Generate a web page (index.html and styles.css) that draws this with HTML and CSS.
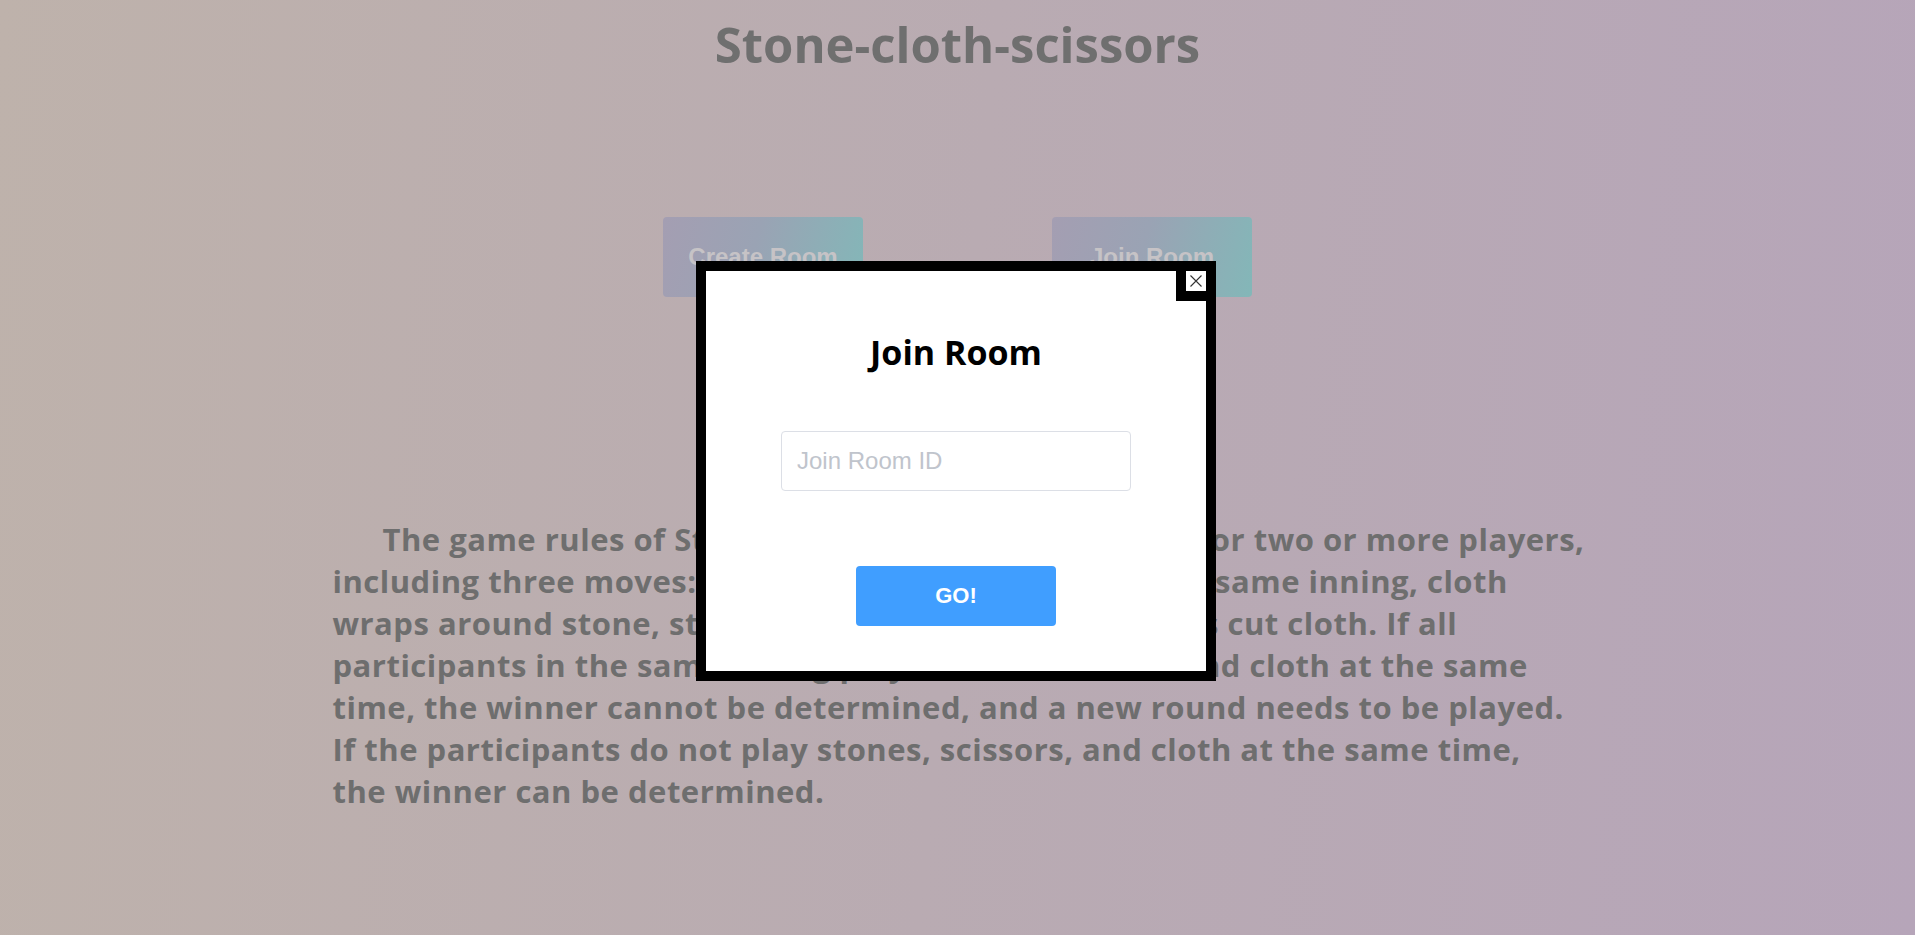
FILE: index.html
```html
<!DOCTYPE html>
<html lang="en">
<head>
<meta charset="utf-8">
<title>Stone-cloth-scissors</title>
<link rel="stylesheet" href="styles.css">
</head>
<body>
<div class="page">
  <h1 class="title">Stone-cloth-scissors</h1>
  <div class="actions">
    <button class="room-btn" type="button">Create Room</button>
    <button class="room-btn" type="button">Join Room</button>
  </div>
  <p class="rules">The game rules of Stone-cloth-scissors are suitable for two or more players,<br>including three moves: stone, scissors and cloth. In the same inning, cloth<br>wraps around stone, stone breaks scissors, and scissors cut cloth. If all<br>participants in the same inning play stones, scissors, and cloth at the same<br>time, the winner cannot be determined, and a new round needs to be played.<br>If the participants do not play stones, scissors, and cloth at the same time,<br>the winner can be determined.</p>
</div>

<div class="overlay">
  <div class="modal">
    <button class="modal-close" type="button" aria-label="Close">
      <svg width="14" height="14" viewBox="0 0 14 14"><path d="M1.5 1.5 L12.5 12.5 M12.5 1.5 L1.5 12.5" stroke="#333" stroke-width="1.1" fill="none"/></svg>
    </button>
    <h2 class="modal-title">Join Room</h2>
    <input class="modal-input" type="text" placeholder="Join Room ID">
    <button class="go-btn" type="button">GO!</button>
  </div>
</div>
</body>
</html>
```
FILE: styles.css
```css
html, body {
  margin: 0;
  padding: 0;
  height: 100%;
}
body {
  background: linear-gradient(95deg, #beb2ab 0%, #b9abb2 50%, #b6a5b9 100%);
  font-family: "Open Sans", "Noto Sans", sans-serif;
  overflow: hidden;
}
.page {
  display: flex;
  flex-direction: column;
  align-items: center;
  padding-top: 19px;
}
.title {
  margin: 0;
  font-size: 49px;
  line-height: 50px;
  font-weight: 700;
  color: #6f6f6f;
}
.actions {
  display: flex;
  gap: 189px;
  margin-top: 148px;
}
.room-btn {
  width: 200px;
  height: 80px;
  border: 0;
  border-radius: 4px;
  background: linear-gradient(105deg, #a49eb2 0%, #9aa3b4 45%, #83b7b8 100%);
  color: #c6c3c6;
  font-family: "Liberation Sans", Arial, sans-serif;
  font-weight: 700;
  font-size: 24px;
}
.rules {
  width: 1250px;
  margin: 221px 0 0;
  font-size: 31px;
  line-height: 42px;
  font-weight: 700;
  letter-spacing: 0.5px;
  color: #6e6e6e;
  text-indent: 50px;
  white-space: nowrap;
}
.overlay {
  position: fixed;
  inset: 0;
}
.modal {
  position: absolute;
  left: 696px;
  top: 261px;
  width: 500px;
  height: 400px;
  border: 10px solid #000;
  background: #fff;
  display: flex;
  flex-direction: column;
  align-items: center;
}
.modal-close {
  position: absolute;
  top: -10px;
  right: -10px;
  width: 40px;
  height: 40px;
  padding: 0;
  border: 10px solid #000;
  background: #fff;
  box-sizing: border-box;
  display: flex;
  align-items: center;
  justify-content: center;
  cursor: pointer;
}
.modal-close svg {
  display: block;
}
.modal-title {
  margin: 63px 0 0;
  font-size: 34px;
  line-height: 36px;
  font-weight: 700;
  color: #000;
}
.modal-input {
  margin-top: 61px;
  width: 350px;
  height: 60px;
  box-sizing: border-box;
  border: 1px solid #dcdfe6;
  border-radius: 4px;
  padding: 0 15px;
  font-family: "Liberation Sans", Arial, sans-serif;
  font-size: 24px;
  color: #606266;
  outline: none;
}
.modal-input::placeholder {
  color: #c0c4cc;
}
.go-btn {
  margin-top: 75px;
  width: 200px;
  height: 60px;
  border: 0;
  border-radius: 4px;
  background: #409eff;
  color: #fff;
  font-family: "Liberation Sans", Arial, sans-serif;
  font-weight: 700;
  font-size: 22px;
  cursor: pointer;
}
```
